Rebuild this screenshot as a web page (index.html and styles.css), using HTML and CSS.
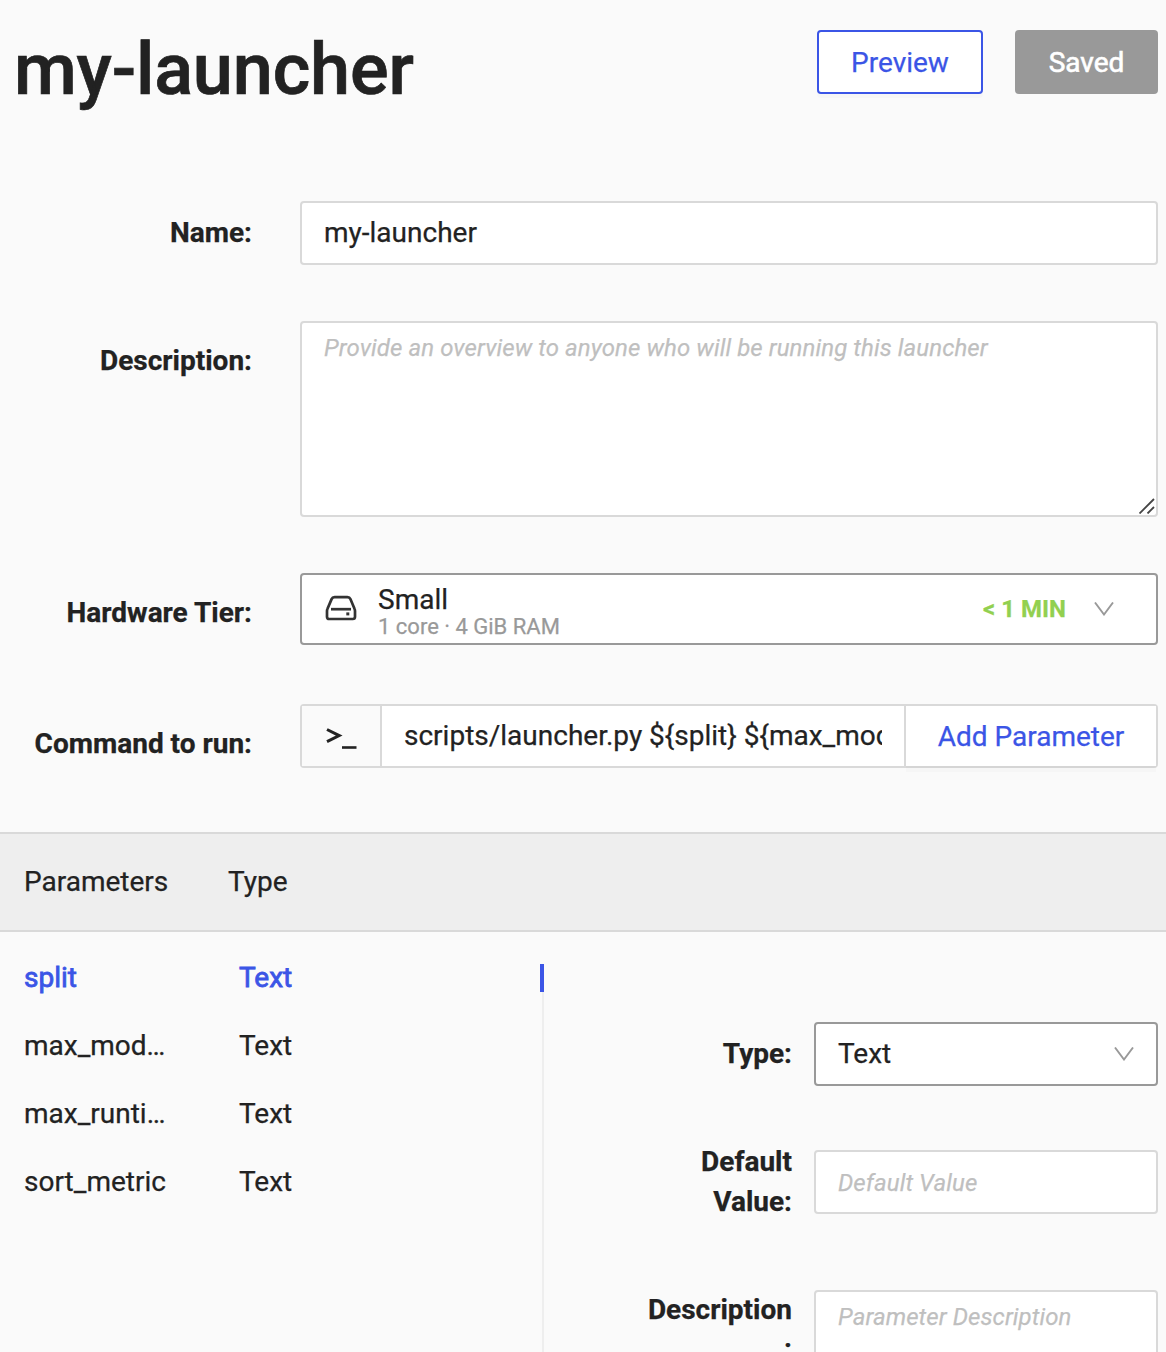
FILE: index.html
```html
<!DOCTYPE html>
<html lang="en">
<head>
<meta charset="utf-8">
<title>my-launcher</title>
<link rel="stylesheet" href="styles.css">
</head>
<body>
<header class="header">
  <h1 class="title">my-launcher</h1>
  <div class="actions">
    <button class="btn btn-outline">Preview</button>
    <button class="btn btn-saved">Saved</button>
  </div>
</header>

<main>
  <section class="form">
    <div class="row">
      <label class="label" for="name">Name:</label>
      <input class="input" id="name" value="my-launcher">
    </div>
    <div class="row row-description">
      <div class="label">Description:</div>
      <div class="textarea">
        <span class="placeholder">Provide an overview to anyone who will be running this launcher</span>
        <svg class="grip" width="16" height="16" viewBox="0 0 16 16"><path d="M.5 15.500L15 1M8.500 15.500L15 9" fill="none" stroke="#444" stroke-width="1.800"/></svg>
      </div>
    </div>
    <div class="row row-tier">
      <div class="label">Hardware Tier:</div>
      <div class="select tier">
        <svg class="drive" width="32" height="26" viewBox="0 0 32 26" fill="none" stroke="#333" stroke-width="2.700" stroke-linejoin="round"><path d="M9.600 2.200h12.800q2.200 0 3 1.900l4 9.400q.6 1.300.6 2.500v5.800q0 2.200-2.200 2.200H4.200q-2.200 0-2.200-2.200v-5.800q0-1.200.6-2.500l4-9.400q.8-1.900 3-1.900z"/><path d="M6 14.200h20"/><rect x="21.300" y="17.400" width="3" height="3" fill="#333" stroke="none"/></svg>
        <div class="tier-text">
          <span class="tier-name">Small</span>
          <span class="tier-spec">1 core · 4 GiB RAM</span>
        </div>
        <span class="tier-time">&lt; 1 MIN</span>
        <svg class="chevron" width="20" height="14" viewBox="0 0 20 14"><path d="M1 .5L10 12.500L19 .5" fill="none" stroke="#999" stroke-width="1.900"/></svg>
      </div>
    </div>
    <div class="row row-command">
      <div class="label">Command to run:</div>
      <div class="command">
        <span class="prompt"><svg width="32" height="22" viewBox="0 0 32 22" fill="none" stroke="#222" stroke-width="3"><path d="M1 2.500L13.200 8.600L1 14.700"/><path d="M16 20.500h14.500" stroke-width="2.600"/></svg></span>
        <input class="command-input" value="scripts/launcher.py ${split} ${max_models} ${max_runtime_secs} ${sort_metric}">
        <button class="add">Add Parameter</button>
      </div>
    </div>
  </section>

  <div class="table-head">
    <span class="col-name">Parameters</span>
    <span>Type</span>
  </div>

  <section class="detail">
    <div class="params">
      <div class="param active"><span class="param-name">split</span><span>Text</span></div>
      <div class="param"><span class="param-name">max_mod…</span><span>Text</span></div>
      <div class="param"><span class="param-name">max_runti…</span><span>Text</span></div>
      <div class="param"><span class="param-name">sort_metric</span><span>Text</span></div>
    </div>
    <div class="rail"><div class="rail-mark"></div></div>
    <div class="editor">
      <div class="field">
        <div class="label">Type:</div>
        <div class="select type-select">
          <span>Text</span>
          <svg class="chevron" width="20" height="14" viewBox="0 0 20 14"><path d="M1 .5L10 12.500L19 .5" fill="none" stroke="#999" stroke-width="1.900"/></svg>
        </div>
      </div>
      <div class="field field-default">
        <div class="label">Default Value:</div>
        <input class="input" placeholder="Default Value">
      </div>
      <div class="field field-description">
        <div class="label">Description<br>:</div>
        <div class="textarea"><span class="placeholder">Parameter Description</span></div>
      </div>
    </div>
  </section>
</main>
</body>
</html>
```
FILE: styles.css
```css
* { box-sizing: border-box; }
html { height: 100%; overflow: hidden; }
body {
  margin: 0;
  height: 1352px;
  overflow: hidden;
  background: #fafafa;
  color: #222;
  font: 28px/40px Roboto, "Liberation Sans", sans-serif;
  -webkit-text-stroke: .25px;
}
input, button { font: inherit; color: inherit; margin: 0; outline: 0; -webkit-text-stroke: .25px; }

.header {
  display: flex;
  justify-content: space-between;
  align-items: flex-start;
  height: 201px;
  padding: 30px 8px 0 14px;
}
.title { margin: 0; font-size: 72px; line-height: 80px; font-weight: 500; letter-spacing: -.15px; -webkit-text-stroke: .7px; }
.actions { display: flex; gap: 32px; }
.btn { height: 64px; padding: 2px 0 0; border-radius: 4px; }
.btn-outline {
  width: 166px;
  background: #fff;
  border: 2px solid #3b55e6;
  color: #3b55e6;
  box-shadow: 0 4px 0 rgba(0, 0, 0, .016);
}
.btn-saved { width: 143px; background: #999; border: 0; color: #fff; -webkit-text-stroke: .6px; }

.form { height: 631px; padding-right: 8px; }
.row { display: grid; grid-template-columns: 252px 1fr; column-gap: 48px; margin-bottom: 56px; }
.row-tier { margin-bottom: 59px; }
.label { font-weight: 700; text-align: right; padding-top: 12px; }
.row-description .label,
.row-tier .label,
.row-command .label { padding-top: 20px; }

.input {
  width: 100%;
  height: 64px;
  padding: 0 22px 2px;
  background: #fff;
  border: 2px solid #d9d9d9;
  border-radius: 4px;
}
.input::placeholder, .placeholder {
  color: #bfbfbf;
  font-size: 24px;
  font-style: italic;
  letter-spacing: .09px;
  opacity: 1;
}
.textarea {
  position: relative;
  height: 196px;
  padding: 4px 22px;
  background: #fff;
  border: 2px solid #d9d9d9;
  border-radius: 4px;
}
.grip { position: absolute; right: 1px; bottom: 1px; }

.select {
  display: flex;
  align-items: center;
  background: #fff;
  border: 2px solid #999;
  border-radius: 4px;
}
.tier { height: 72px; padding: 0 42px 0 23px; }
.drive { margin-bottom: 2px; }
.tier-text { display: flex; flex-direction: column; margin-left: 21px; padding-top: 4px; flex: 1; }
.tier-name { line-height: 32px; }
.tier-spec { font-size: 22px; line-height: 22px; color: #999; }
.tier-time { font-size: 24px; font-weight: 700; color: #92d050; margin-right: 28px; }

.command { display: flex; height: 64px; border: 2px solid #d9d9d9; border-radius: 4px; background: #fff; }
.prompt { width: 78px; padding: 4px 0 0 2px; display: flex; align-items: center; justify-content: center; background: #fafafa; }
.command-input {
  width: 526px;
  padding: 0 22px;
  border: 0;
  border-left: 2px solid #d9d9d9;
  border-right: 2px solid #d9d9d9;
  background: #fff;
}
.add { flex: 1; padding: 2px 0 0; border: 0; background: #fff; color: #3b55e6; box-shadow: 0 6px 0 rgba(0, 0, 0, .016); }

.table-head {
  display: flex;
  align-items: center;
  height: 100px;
  padding-left: 24px;
  background: #eee;
  border-top: 2px solid #d9d9d9;
  border-bottom: 2px solid #d9d9d9;
}
.col-name { width: 204px; }

.detail { display: flex; height: 420px; padding: 0 8px 0 24px; overflow: hidden; }
.params { width: 516px; padding-top: 26px; }
.param { display: flex; height: 68px; }
.param-name { width: 215px; }
.active { color: #3b55e6; -webkit-text-stroke: .8px #3b55e6; }
.rail { width: 4px; height: 388px; margin-top: 32px; background: linear-gradient(90deg, transparent 50%, #eee 50%); }
.rail-mark { height: 28px; background: #3b55e6; }
.editor { flex: 1; padding-top: 90px; }
.field { display: grid; grid-template-columns: 248px 344px; column-gap: 22px; height: 128px; }
.type-select { height: 64px; padding: 0 22px; justify-content: space-between; }
.field-default { height: 140px; }
.field-default .label { padding: 0 0 0 140px; margin-top: -8px; }
.field-description .label { padding-top: 0; line-height: 39px; }
```
